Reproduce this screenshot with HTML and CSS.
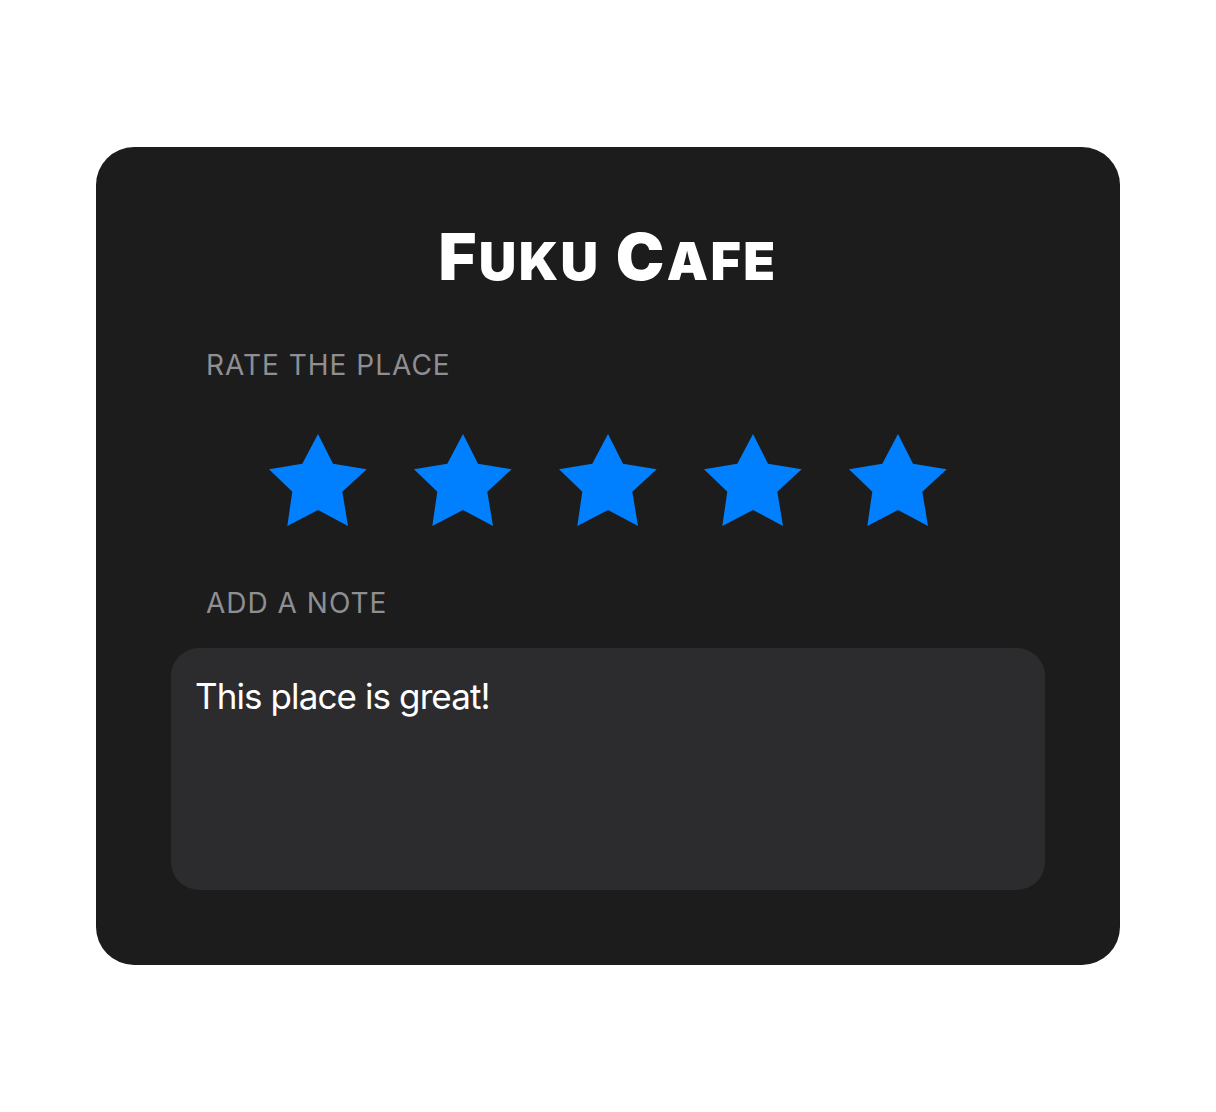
FILE: index.html
```html
<!DOCTYPE html>
<html>
<head>
<meta charset="utf-8">
<link rel="stylesheet" href="styles.css">
</head>
<body>
<div class="card">
  <h1 class="title"><span class="cap">F</span><span class="sc">UKU</span> <span class="cap">C</span><span class="sc">AFE</span></h1>
  <div class="label label-rate">RATE THE PLACE</div>
  <div class="stars">
    <svg class="star" viewBox="0 0 98 92"><polygon points="49,0 64,29.7 97.7,35.3 73.3,57.7 79,92 49,76 18.3,92 23.3,57.7 0,35.3 33.3,29.7"/></svg>
    <svg class="star" viewBox="0 0 98 92"><polygon points="49,0 64,29.7 97.7,35.3 73.3,57.7 79,92 49,76 18.3,92 23.3,57.7 0,35.3 33.3,29.7"/></svg>
    <svg class="star" viewBox="0 0 98 92"><polygon points="49,0 64,29.7 97.7,35.3 73.3,57.7 79,92 49,76 18.3,92 23.3,57.7 0,35.3 33.3,29.7"/></svg>
    <svg class="star" viewBox="0 0 98 92"><polygon points="49,0 64,29.7 97.7,35.3 73.3,57.7 79,92 49,76 18.3,92 23.3,57.7 0,35.3 33.3,29.7"/></svg>
    <svg class="star" viewBox="0 0 98 92"><polygon points="49,0 64,29.7 97.7,35.3 73.3,57.7 79,92 49,76 18.3,92 23.3,57.7 0,35.3 33.3,29.7"/></svg>
  </div>
  <div class="label label-note">ADD A NOTE</div>
  <div class="note">This place is great!</div>
</div>
</body>
</html>
```
FILE: styles.css
```css
html, body {
  margin: 0;
  padding: 0;
  background: #ffffff;
}
body {
  font-family: Inter, "Liberation Sans", sans-serif;
}
.card {
  box-sizing: border-box;
  width: 1024px;
  margin: 147px 0 0 96px;
  padding: 77px 75px 75px;
  background: #1c1c1c;
  border-radius: 38px;
}
.title {
  margin: 0;
  text-align: center;
  color: #ffffff;
  font-weight: 900;
  line-height: 65px;
  height: 65px;
  font-size: 65px;
  letter-spacing: 2.4px;
}
.title .cap {
  font-size: 65px;
}
.title .sc {
  font-size: 52px;
}
.label {
  color: #8e8e93;
  font-size: 28px;
  line-height: 28px;
  padding-left: 35px;
  letter-spacing: 1px;
}
.label-rate {
  margin-top: 62px;
}
.stars {
  margin-top: 55px;
  display: flex;
  justify-content: center;
  gap: 47px;
}
.star {
  width: 98px;
  height: 92px;
  display: block;
  fill: #0080ff;
}
.label-note {
  margin-top: 63px;
}
.note {
  margin-top: 31px;
  box-sizing: border-box;
  height: 242px;
  background: #2c2c2e;
  border-radius: 28px;
  padding: 31px 24px;
  color: #ffffff;
  font-size: 35px;
  line-height: 35px;
  letter-spacing: -0.9px;
}
```
